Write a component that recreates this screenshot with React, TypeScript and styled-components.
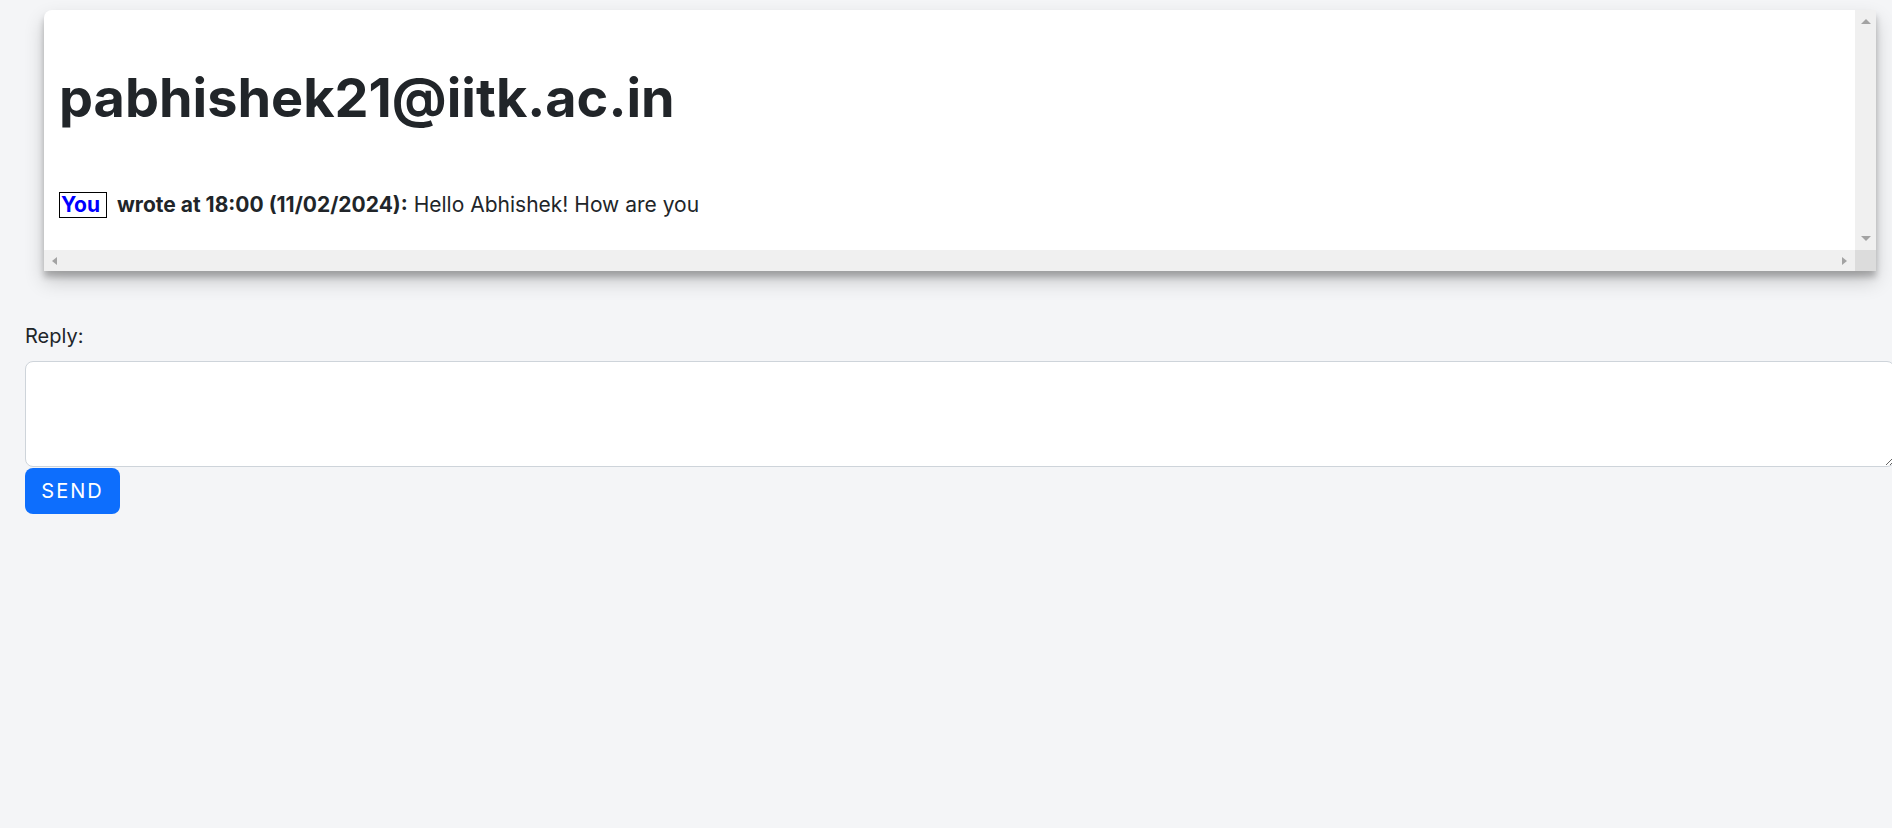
import React from 'react';
import styled, { createGlobalStyle } from 'styled-components';

const GlobalStyle = createGlobalStyle`
  body {
    margin: 0;
    background: #f4f5f7;
    font-family: Inter, "DejaVu Sans", sans-serif;
    color: #212529;
    overflow: hidden;
  }
`;

const Page = styled.div`
  padding: 10px 16px 0 25px;
`;

const Card = styled.div`
  margin-left: 19px;
  display: grid;
  grid-template-columns: 1fr 21px;
  grid-template-rows: 240px 21px;
  background: #fff;
  border-top-left-radius: 8px;
  overflow: hidden;
  box-shadow: 0 10px 20px rgba(0, 0, 0, 0.19), 0 6px 6px rgba(0, 0, 0, 0.23);
`;

const Content = styled.div`
  padding: 0 15px;
  overflow: hidden;
`;

const Title = styled.h1`
  margin: 56px 0 0;
  font-size: 54px;
  line-height: 64px;
  font-weight: 700;
`;

const Message = styled.p`
  margin: 60px 0 0;
  font-size: 21px;
  line-height: 30px;
  white-space: nowrap;
`;

const Author = styled.span`
  display: inline-block;
  line-height: 24px;
  padding: 0 6px 0 1px;
  border: 1px solid #000;
  color: #0000ff;
  font-weight: 700;
  margin-right: 10px;
`;

const Meta = styled.b`
  font-weight: 700;
`;

const Body = styled.span`
  font-weight: 400;
`;

const ScrollTrack = styled.div<{ $vertical?: boolean }>`
  background: #f0f0f0;
  display: flex;
  flex-direction: ${(p) => (p.$vertical ? 'column' : 'row')};
  justify-content: space-between;
  align-items: center;
  padding: ${(p) => (p.$vertical ? '9px 0 9px' : '0 8px 0 8px')};
`;

const Corner = styled.div`
  background: #dcdcdc;
`;

const Arrow = styled.span<{ $dir: 'up' | 'down' | 'left' | 'right' }>`
  width: 0;
  height: 0;
  border-style: solid;
  border-color: transparent;
  ${(p) =>
    p.$dir === 'up'
      ? 'border-width: 0 5px 5px; border-bottom-color: #a3a3a3;'
      : p.$dir === 'down'
      ? 'border-width: 5px 5px 0; border-top-color: #a3a3a3;'
      : p.$dir === 'left'
      ? 'border-width: 4.5px 5px 4.5px 0; border-right-color: #a3a3a3;'
      : 'border-width: 4.5px 0 4.5px 5px; border-left-color: #a3a3a3;'}
`;

const ReplyLabel = styled.label`
  display: block;
  margin-top: 50px;
  font-size: 20px;
  line-height: 30px;
  font-weight: 400;
`;

const ReplyBox = styled.textarea`
  display: block;
  box-sizing: border-box;
  margin: 10px 0 0;
  width: 1870px;
  height: 106px;
  border: 1px solid #ced4da;
  border-radius: 8px;
  background: #fff;
  font-family: inherit;
  font-size: 20px;
  padding: 7px 15px;
`;

const SendButton = styled.button`
  display: block;
  margin-top: 1px;
  width: 95px;
  height: 46px;
  border: none;
  border-radius: 8px;
  background: #0d6efd;
  color: #fff;
  font-family: inherit;
  font-size: 20px;
  letter-spacing: 2px;
  text-transform: uppercase;
  cursor: pointer;
`;

export default function App() {
  return (
    <>
      <GlobalStyle />
      <Page>
        <Card>
          <Content>
            <Title>pabhishek21@iitk.ac.in</Title>
            <Message>
              <Author>You</Author>
              <Meta>wrote at 18:00 (11/02/2024):</Meta> <Body>Hello Abhishek! How are you</Body>
            </Message>
          </Content>
          <ScrollTrack $vertical>
            <Arrow $dir="up" />
            <Arrow $dir="down" />
          </ScrollTrack>
          <ScrollTrack>
            <Arrow $dir="left" />
            <Arrow $dir="right" />
          </ScrollTrack>
          <Corner />
        </Card>
        <ReplyLabel htmlFor="reply">Reply:</ReplyLabel>
        <ReplyBox id="reply" />
        <SendButton>Send</SendButton>
      </Page>
    </>
  );
}
